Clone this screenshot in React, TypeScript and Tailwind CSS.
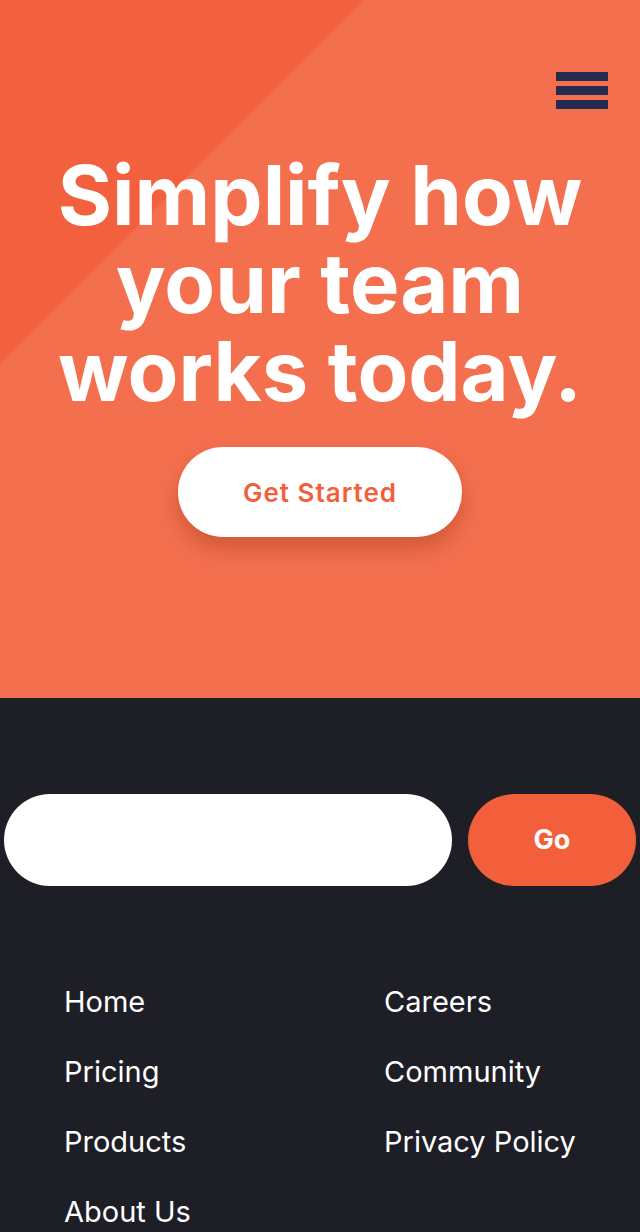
const links = [
  ["Home", "Careers"],
  ["Pricing", "Community"],
  ["Products", "Privacy Policy"],
  ["About Us", ""],
]

export default function App() {
  return (
    <div className="w-[640px] min-h-[1232px] bg-[#1e1e26] font-['Inter',sans-serif]">
      {/* Hero */}
      <section className="relative h-[698px] overflow-hidden bg-[#f36f4e]">
        <div className="absolute left-0 top-0 h-[364px] w-[364px] bg-[#f2603d] [clip-path:polygon(0_0,100%_0,0_100%)]" />
        <div className="relative flex flex-col items-center">
          <div className="flex w-full justify-end pr-8 pt-[72px]">
            <button type="button" className="flex w-[52px] flex-col gap-[5px]">
              <span className="h-[9px] w-full bg-[#232b4f]" />
              <span className="h-[9px] w-full bg-[#232b4f]" />
              <span className="h-[9px] w-full bg-[#232b4f]" />
            </button>
          </div>
          <h1 className="mt-[42px] text-center text-[83px] font-bold leading-[88px] tracking-[0px] text-white">
            Simplify how
            <br />
            your team
            <br />
            works today.
          </h1>
          <button
            type="button"
            className="mt-[32px] h-[90px] w-[284px] rounded-full bg-white text-[26px] font-semibold tracking-[1px] text-[#f25f3a] shadow-[0_12px_20px_rgba(150,50,20,0.35)]"
          >
            Get Started
          </button>
        </div>
      </section>

      {/* Footer */}
      <footer className="pt-[96px] pb-4">
        <div className="flex gap-4 px-1">
          <input className="h-[92px] flex-1 rounded-full bg-white px-8 outline-none" />
          <button
            type="button"
            className="h-[92px] w-[168px] rounded-full bg-[#f25f3a] text-[27px] font-bold text-white"
          >
            Go
          </button>
        </div>
        <div className="mt-[98px] grid grid-cols-2 gap-y-[34px] pl-16 text-[29px] leading-[36px] text-white">
          {links.flat().map((l, i) => (
            <a key={i} href="#" className={i % 2 ? "pl-8" : ""}>
              {l}
            </a>
          ))}
        </div>
      </footer>
    </div>
  )
}
